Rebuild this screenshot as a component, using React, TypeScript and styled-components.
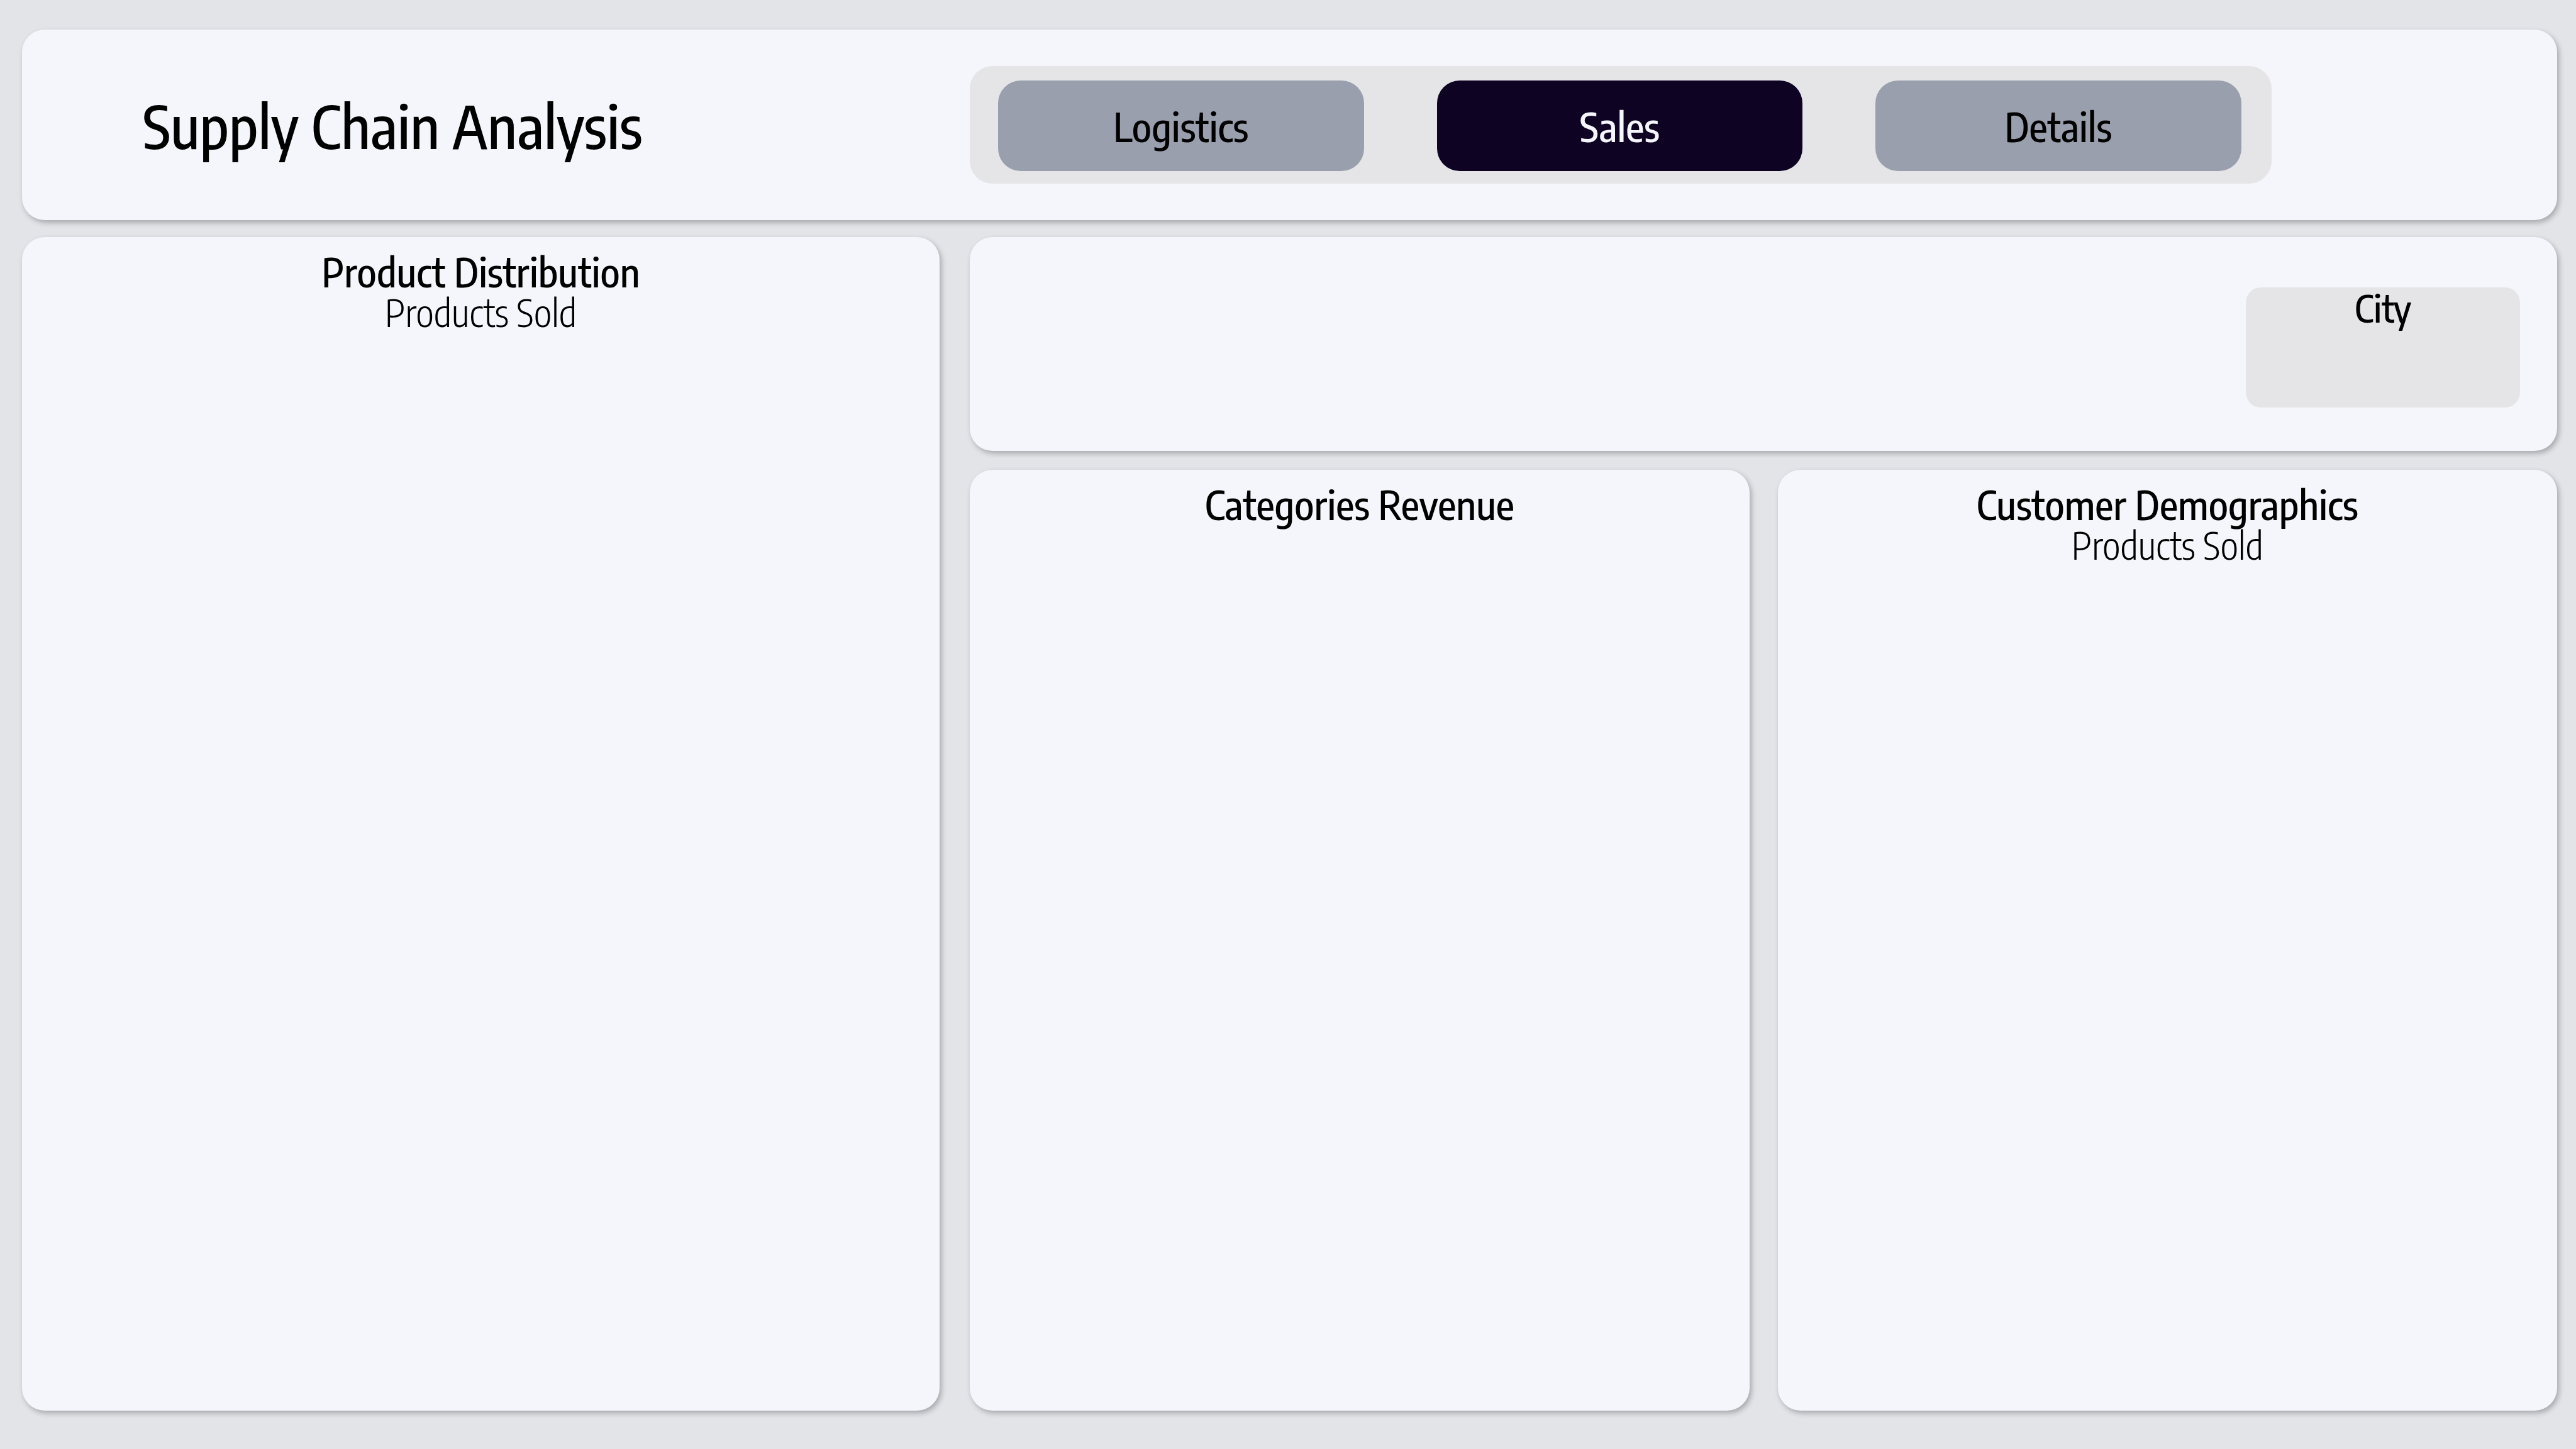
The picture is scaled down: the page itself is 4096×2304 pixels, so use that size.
import React, { useState } from 'react';
import styled, { createGlobalStyle } from 'styled-components';

const colors = {
  page: '#e3e4e8',
  card: '#f5f6fb',
  inset: '#e5e5e7',
  tab: '#9a9fae',
  tabActive: '#0f0324',
  ink: '#000000',
};

const GlobalStyle = createGlobalStyle`
  *, *::before, *::after { box-sizing: border-box; }
  body {
    margin: 0;
    background: ${colors.page};
    color: ${colors.ink};
    font-family: "Encode Sans Condensed", "Roboto Condensed", "Noto Sans", sans-serif;
  }
  h1, h2, p { margin: 0; }
`;

const Page = styled.div`
  display: flex;
  flex-direction: column;
  gap: 27px;
  min-height: 100vh;
  padding: 47px 30px 61px 35px;
`;

const Card = styled.section`
  background: ${colors.card};
  border-radius: 36px;
  box-shadow: 3px 4px 8px rgba(0, 0, 0, 0.27);
`;

const Header = styled(Card).attrs({ as: 'header' })`
  display: grid;
  grid-template-columns: 1459fr 2524fr;
  column-gap: 48px;
  align-items: center;
  padding: 58px 0;
`;

const Title = styled.h1`
  padding-left: 192px;
  font-size: 94px;
  line-height: 120px;
  font-weight: 500;
`;

const Tabs = styled.nav`
  display: flex;
  gap: 116px;
  width: 82%;
  padding: 23px 48px 20px 45px;
  background: ${colors.inset};
  border-radius: 36px;
`;

const Tab = styled.button<{ $active: boolean }>`
  flex: 1;
  height: 144px;
  padding: 0;
  border: 0;
  border-radius: 36px;
  background: ${p => (p.$active ? colors.tabActive : colors.tab)};
  color: ${p => (p.$active ? colors.card : colors.ink)};
  font-family: inherit;
  font-size: 64px;
  line-height: 64px;
  font-weight: 500;
  cursor: pointer;
`;

const Board = styled.main`
  flex: 1;
  display: grid;
  grid-template-columns: 1459fr 2524fr;
  column-gap: 48px;
`;

const Column = styled.div`
  display: flex;
  flex-direction: column;
  gap: 30px;
`;

const FilterCard = styled(Card)`
  display: flex;
  justify-content: flex-end;
  padding: 80px 59px 69px;
`;

const FilterBox = styled.div`
  width: 436px;
  height: 191px;
  background: ${colors.inset};
  border-radius: 24px;
  text-align: center;
`;

const Charts = styled.div`
  flex: 1;
  display: grid;
  grid-template-columns: 1fr 1fr;
  column-gap: 45px;
`;

const ChartCard = styled(Card)`
  padding: 22px 36px;
  text-align: center;
`;

const Heading = styled.h2<{ $small?: boolean }>`
  font-size: ${p => (p.$small ? 60 : 64)}px;
  line-height: 64px;
  font-weight: 500;
`;

const Subheading = styled.p`
  font-size: 60px;
  line-height: 66px;
  font-weight: 300;
`;

const tabs = ['Logistics', 'Sales', 'Details'];

function Chart({ title, subtitle }: { title: string; subtitle?: string }) {
  return (
    <ChartCard>
      <Heading>{title}</Heading>
      {subtitle && <Subheading>{subtitle}</Subheading>}
    </ChartCard>
  );
}

export default function App() {
  const [active, setActive] = useState('Sales');
  return (
    <>
      <GlobalStyle />
      <Page>
        <Header>
          <Title>Supply Chain Analysis</Title>
          <Tabs>
            {tabs.map(name => (
              <Tab
                key={name}
                type="button"
                $active={name === active}
                aria-pressed={name === active}
                onClick={() => setActive(name)}
              >
                {name}
              </Tab>
            ))}
          </Tabs>
        </Header>
        <Board>
          <Chart title="Product Distribution" subtitle="Products Sold" />
          <Column>
            <FilterCard>
              <FilterBox>
                <Heading $small>City</Heading>
              </FilterBox>
            </FilterCard>
            <Charts>
              <Chart title="Categories Revenue" />
              <Chart title="Customer Demographics" subtitle="Products Sold" />
            </Charts>
          </Column>
        </Board>
      </Page>
    </>
  );
}
